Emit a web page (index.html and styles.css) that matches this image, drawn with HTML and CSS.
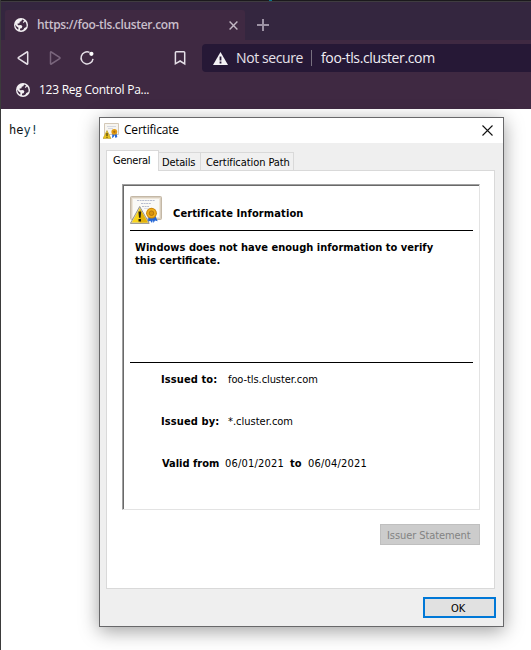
FILE: index.html
```html
<!DOCTYPE html>
<html lang="en">
<head>
<meta charset="utf-8">
<title>foo-tls.cluster.com</title>
<link rel="stylesheet" href="styles.css">
</head>
<body>
<svg width="0" height="0" class="defs">
  <symbol id="globe" viewBox="0 0 14 14">
    <circle cx="7" cy="7" r="7" fill="#f3f0f3"/>
    <path d="M8.1 1.4 7.3 3.2 5.7 3.8 5.5 5.2 3.3 5.8 4.1 7.2 7.2 7.1 8.4 8.5 7.6 10.2 6.1 10.5 5.9 12.3C8.2 12.8 9.8 11.7 10.3 10.1L12.4 9.1C13 6.8 12.3 4.7 11 3.5L9.6 4.9 8.8 4.3 10.2 2.6ZM1.3 6.4C1.2 8.7 2.3 10.6 4.2 11.7L4.5 9.8 2.7 8.5Z" fill="#3f2942"/>
  </symbol>
  <symbol id="cert" viewBox="0 0 32 28">
    <rect x=".5" y=".5" width="31" height="23" rx="1" fill="#d9cfc0" stroke="#c4b8a6"/>
    <rect x="2.5" y="2.5" width="27" height="19" fill="#faf9f6" stroke="#eee6d9"/>
    <path d="M7 4.5h18M11 7.5h10M12 10.5h7" stroke="#b8bdce" stroke-dasharray="2 .6"/>
    <path d="M14 12.5h9" stroke="#dddfe7"/>
    <path d="m18.5 20-.5 6 2.2-1.3L22 27l1.5-5ZM22 20l1.5 7 1.5-2.5 2.7.8L25 19Z" fill="#2466d5"/>
    <circle cx="21.5" cy="17.2" r="5.4" fill="#c98408"/>
    <circle cx="21.5" cy="17.2" r="4.4" fill="#efad1b"/>
    <circle cx="21.5" cy="17.2" r="2.3" fill="#d8940d" stroke="#a96b0b" stroke-width=".8"/>
    <path d="M9.7 10.5 19.2 27.4H.4Z" fill="#d8d5cd" stroke="#8f8b80" stroke-width=".9" stroke-linejoin="round"/>
    <path d="M9.7 12.2 17.8 26.5H1.8Z" fill="#f9d51a"/>
    <path d="M9.7 12.2 17.8 26.5h-8Z" fill="#e3b20a"/>
    <path d="M8.4 15.5h2.8l-.6 6.3H9ZM8.5 23h2.5v2.4H8.5Z" fill="#28210f"/>
  </symbol>
</svg>
<div class="browser">
  <div class="topline"><i></i></div>
  <div class="tabstrip">
    <div class="tab">
      <svg class="globe" width="14" height="14"><use href="#globe"/></svg>
      <span class="tab-title">https://foo-tls.cluster.com</span>
      <svg class="tab-x" width="9" height="9" viewBox="0 0 9 9"><path d="m.6.6 7.8 7.8M8.4.6.6 8.4"/></svg>
    </div>
    <svg class="plus" width="12" height="12" viewBox="0 0 12 12"><path d="M6 0v12M0 6h12"/></svg>
  </div>
  <div class="toolbar">
    <svg width="190" height="28" viewBox="0 0 190 28" class="nav">
      <path d="M26.7 8.4v11.2q0 .8-.8.4L17.6 14.6q-.8-.6 0-1.2L25.9 8q.8-.4.8.4Z"/>
      <path class="dim" d="M49.5 8.4v11.2q0 .8.8.4l8.3-5.4q.8-.6 0-1.2L50.3 8q-.8-.4-.8.4Z"/>
      <path d="M88.5 8.4A6 6 0 1 0 92 14.8"/><circle class="dot" cx="90.4" cy="9.8" r="2.1"/>
      <path d="M175.3 7.7h7.5q.9 0 .9.9v11.2L179.1 17l-4.7 2.8V8.6q0-.9.9-.9Z"/>
    </svg>
    <div class="address">
      <svg width="15" height="13" viewBox="0 0 15 13"><path d="M7.5 0 15 13H0Z" fill="#f4f2f5"/><path d="M6.6 4.5h1.8v4H6.6ZM6.6 9.6h1.8v1.8H6.6Z" fill="#261836"/></svg>
      <span class="notsecure">Not secure</span><span class="sep"></span><span class="url">foo-tls.cluster.com</span>
    </div>
  </div>
  <div class="bookmarks">
    <svg class="globe" width="14" height="14"><use href="#globe"/></svg>
    <span class="bm">123 Reg Control Pa...</span>
  </div>
  <div class="page"><span class="hey">he<i>y!</i></span></div>
</div>
<div class="dialog">
  <div class="titlebar">
    <svg width="16" height="16" viewBox="0 0 16 16">
      <path d="M1.5.5h14v11h-14Z" fill="#f7f5f0" stroke="#d3c8b7"/>
      <path d="M4 3.5h9M5 5.5h5" stroke="#d5d8e0"/>
      <path d="m9.5 10-.5 5 1.7-1 .8-2 1 3 1.8-1-1-4Z" fill="#2466d5"/>
      <circle cx="11.3" cy="8.8" r="2.9" fill="#e09a12"/><circle cx="11.3" cy="8.8" r="1.1" fill="#a96b0b"/>
      <path d="M4 7.5 8 15.6H0Z" fill="#e9c21b" stroke="#b99a2c" stroke-width=".6"/>
      <path d="M3.5 10h1v3h-1ZM3.5 13.8h1v1h-1Z" fill="#28210f"/>
    </svg>
    <span class="title">Certificate</span>
    <svg class="close" width="11" height="11" viewBox="0 0 11 11"><path d="m.5.5 10 10M10.5.5l-10 10"/></svg>
  </div>
  <div class="dtabs">
    <div class="dtab active"><span class="t-general">General</span></div>
    <div class="dtab details"><span class="t-details">Details</span></div>
    <div class="dtab path"><span class="t-path">Certification Path</span></div>
  </div>
  <div class="panel">
    <div class="info">
      <div class="head"><svg width="32" height="28"><use href="#cert"/></svg><b class="t-head">Certificate Information</b></div>
      <div class="message"><b class="t-m1">Windows does not have enough information to verify</b><br><b class="t-m2">this certificate.</b></div>
      <div class="field f1"><b class="t-to">Issued to:</b><span class="t-foo">foo-tls.cluster.com</span></div>
      <div class="field f2"><b class="t-by">Issued by:</b><span class="t-star">*.cluster.com</span></div>
      <div class="field f3"><b class="t-valid">Valid from</b><span class="t-d1">06/01/2021</span><b class="t-t">to</b><span class="t-d2">06/04/2021</span></div>
    </div>
    <div class="issuer"><span class="t-issuer">Issuer Statement</span></div>
  </div>
  <div class="ok"><span class="t-ok">OK</span></div>
</div>
</body>
</html>
```

FILE: styles.css
```css
* { box-sizing: border-box; }
body { margin: 0; width: 531px; height: 650px; overflow: hidden; position: relative; background: #fff; white-space: nowrap; }
svg { display: block; flex: none; }
.defs { position: absolute; }
span, b { display: inline-block; }
.browser { height: 650px; display: flex; flex-direction: column; border-left: 1px solid #3b3b3b; font-family: "Open Sans", "Noto Sans", sans-serif; }
.topline { height: 2px; flex: none; background: #1b191c; border-bottom: 1px solid #3f3c40; }
.topline i { display: block; width: 3px; height: 1px; margin-left: 268px; background: #087389; }
.tabstrip { height: 38px; flex: none; background: #34263f; display: flex; padding: 8px 0 0 4px; }
.tab { width: 240px; height: 30px; background: #3f2942; border-radius: 3px 3px 0 0; display: flex; align-items: center; padding-left: 9px; }
.tab-title { width: 142px; margin: 0 50px 0 9px; font-size: 12px; line-height: 16px; font-weight: 600; letter-spacing: -.33px; color: #c9bfcb; }
.tab-x { stroke: #c2b8c4; stroke-width: 1.4; }
.plus { margin: 9px 0 0 12px; stroke: #9d92a4; stroke-width: 2; }
.toolbar { height: 36px; flex: none; background: #3f2942; display: flex; align-items: center; }
.nav { fill: none; stroke: #e5dfe7; stroke-width: 1.5; }
.nav .dim { stroke: #79657c; }
.nav .dot { fill: #fff; stroke: none; }
.address { margin-left: 11px; flex: 1; height: 28px; border-radius: 4px 0 0 4px; background: #261836; display: flex; align-items: center; padding-left: 11px; color: #f1eef4; font-size: 14px; line-height: 20px; }
.notsecure { margin-left: 8px; width: 67px; letter-spacing: -.4px; color: #e6e2ea; }
.sep { width: 1px; height: 16px; background: #77707f; margin: 0 9px 0 8px; }
.url { letter-spacing: -.37px; }
.bookmarks { height: 33px; flex: none; background: #3f2942; display: flex; align-items: center; padding: 0 0 5px 15px; color: #fff; font-size: 12px; line-height: 16px; }
.bm { margin-left: 9px; letter-spacing: -.25px; }
.page { padding: 13px 0 0 8px; font: 12px/16px "DejaVu Sans Mono", monospace; color: #111; }
.page i { font-style: normal; color: #123a4c; }
.dialog { position: absolute; left: 99px; top: 117px; width: 405px; height: 510px; background: #efefef; border: 1px solid #68686a; box-shadow: 0 4px 18px rgba(0,0,0,.38); font: 11px/13px "DejaVu Sans Condensed", "DejaVu Sans", sans-serif; color: #000; }
.titlebar { height: 25px; background: #fff; display: flex; align-items: center; padding: 0 10px 0 3px; }
.title { font: 12px/16px "Open Sans", sans-serif; letter-spacing: -.2px; margin: -2px 0 0 5px; }
.close { margin-left: auto; stroke: #111; stroke-width: 1.1; }
.dtabs { height: 27px; padding: 7px 0 0 6px; display: flex; align-items: flex-end; }
.dtab { height: 18px; border: 1px solid #d9d9d9; border-bottom: 0; border-left: 0; padding: 3px 0 0 5px; background: #f0f0f0; }
.active { width: 53px; height: 21px; margin-bottom: -1px; border-left: 1px solid #d9d9d9; background: #fff; padding: 3px 0 0 6px; z-index: 1; }
.t-general { letter-spacing: -.25px; }
.t-details { letter-spacing: -.15px; }
.t-path { letter-spacing: -.08px; }
.details { width: 42px; padding-left: 3px; }
.path { width: 93px; }
.panel { margin-left: 6px; width: 389px; height: 419px; background: #fff; border: 1px solid #d9d9d9; padding: 13px 0 0 15px; }
.info { width: 358px; height: 326px; border: solid; border-width: 1px; border-color: #a0a0a0 #e3e3e3 #e3e3e3 #a0a0a0; box-shadow: inset 1px 1px #696969; padding: 1px 6px 0 7px; }
.head { height: 45px; border-bottom: 1px solid #000; display: flex; padding-top: 10px; }
.t-head { margin: 11px 0 0 11px; letter-spacing: .12px; }
.message { height: 132px; border-bottom: 1px solid #000; padding: 10px 0 0 5px; }
.t-m1 { letter-spacing: .02px; }
.field { display: flex; height: 42px; padding-left: 31px; }
.f1 { padding-top: 10px; }
.f2 { padding-top: 10px; }
.f3 { padding: 10px 0 0 32px; }
.t-to, .t-by { width: 67px; letter-spacing: .1px; }
.t-foo { letter-spacing: -.08px; }
.t-valid { width: 63px; }
.t-d1 { width: 65px; letter-spacing: .2px; }
.t-d2 { letter-spacing: .2px; }
.t-t { width: 18px; }
.issuer { margin: 14px 0 0 258px; width: 100px; height: 21px; background: #ccc; border: 1px solid #bfbfbf; color: #838383; padding: 4px 0 0 6px; }
.t-issuer { letter-spacing: -.08px; }
.ok { margin: 8px 0 0 323px; width: 73px; height: 21px; background: #e1e1e1; border: 2px solid #0078d7; padding: 3px 0 0 26px; }
```
